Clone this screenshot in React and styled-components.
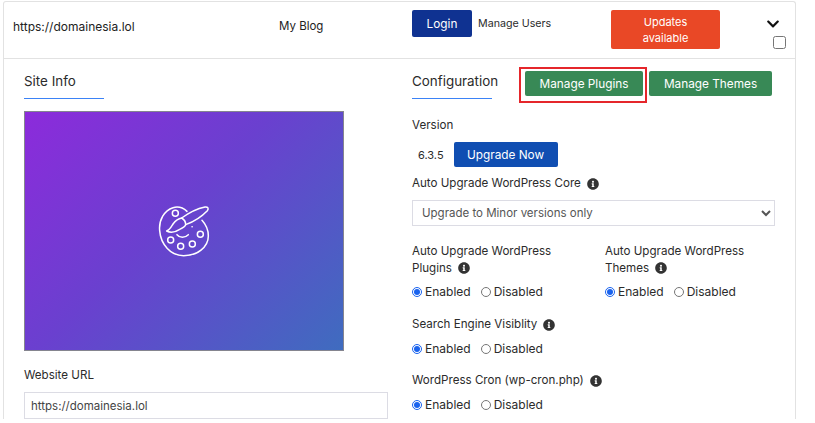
import { FaChevronDown, FaInfoCircle } from 'react-icons/fa';
import styled, { createGlobalStyle } from 'styled-components';

const GlobalStyle = createGlobalStyle`
  html, body {
    margin: 0;
    height: 100%;
    overflow: hidden;
    background: #ffffff;
  }

  body {
    font-family: Inter, "Liberation Sans", sans-serif;
    font-size: 12px;
    color: #2b2b2b;
  }
`;

const Card = styled.div`
  box-sizing: border-box;
  width: 793px;
  margin: 1px 0 0 3px;
  border: 1px solid #e2e2e2;
  border-bottom: none;
  border-radius: 3px 3px 0 0;
`;

const Header = styled.div`
  display: grid;
  grid-template-columns: 266px 133px 199px 109px 1fr;
  height: 57px;
  box-sizing: border-box;
  padding: 8px 0 0 9px;
  border-bottom: 1px solid #e2e2e2;
`;

const HeaderText = styled.span`
  margin-top: 9px;
  font-size: ${({ $size }) => $size || 12}px;
  line-height: 15px;
  color: #222;
`;

const LoginCell = styled.div`
  display: flex;
  align-items: flex-start;
  gap: 6px;
`;

const Button = styled.button`
  box-sizing: border-box;
  border: none;
  border-radius: 2px;
  padding: 0;
  font-family: inherit;
  font-size: 11.8px;
  color: #ffffff;
  background: ${({ $bg }) => $bg};
  width: ${({ $w }) => $w}px;
  height: ${({ $h }) => $h || 25}px;
`;

const ManageUsers = styled.span`
  margin-top: 6px;
  font-size: 10.7px;
  line-height: 15px;
`;

const UpdatesButton = styled(Button)`
  font-size: 11px;
  line-height: 16px;
`;

const Actions = styled.div`
  display: flex;
  flex-direction: column;
  align-items: flex-start;
  padding: 7px 0 0 46px;
  gap: 5px;
`;

const Checkbox = styled.input`
  margin: 0 0 0 7px;
  width: 13px;
  height: 13px;
`;

const Body = styled.div`
  display: grid;
  grid-template-columns: 388px 363px;
  padding-left: 20px;
  gap: 0;
`;

const LeftColumn = styled.div`
  display: flex;
  flex-direction: column;
  width: 364px;
`;

const TabTitle = styled.div`
  box-sizing: border-box;
  width: 80px;
  height: 40px;
  padding-top: 14px;
  font-size: 13.4px;
  line-height: 16px;
  white-space: nowrap;
  color: #2b2b2b;
  border-bottom: 1px solid #3b82f6;
`;

const Preview = styled.div`
  box-sizing: border-box;
  display: flex;
  align-items: center;
  justify-content: center;
  width: 320px;
  height: 240px;
  margin-top: 12px;
  border: 1px solid #85858f;
  background: linear-gradient(135deg, #8c2bdb 0%, #6a40cf 45%, #3f6cbf 100%);
`;

const FieldLabel = styled.label`
  display: flex;
  align-items: center;
  gap: 6px;
  font-size: 11.6px;
  line-height: 17px;
  color: #2b2b2b;
`;

const UrlLabel = styled(FieldLabel)`
  margin-top: 16px;
`;

const UrlInput = styled.input`
  box-sizing: border-box;
  width: 364px;
  height: 27px;
  margin-top: 8px;
  padding: 0 6px;
  border: 1px solid #dcdce4;
  font-family: inherit;
  font-size: 11.5px;
  color: #444;
`;

const RightColumn = styled.div`
  display: flex;
  flex-direction: column;
`;

const ConfigRow = styled.div`
  display: flex;
  align-items: flex-start;
`;

const Highlight = styled.div`
  box-sizing: border-box;
  width: 128px;
  height: 36px;
  margin: 8px 2px 0 27px;
  padding: 2px 0 0 4px;
  border: 2px solid #e5262b;
`;

const ThemesButton = styled(Button)`
  margin-top: 12px;
`;

const VersionLabel = styled(FieldLabel)`
  margin-top: 14px;
`;

const VersionRow = styled.div`
  display: flex;
  align-items: center;
  gap: 10px;
  margin-top: 8px;
  padding-left: 6px;
  font-size: 11px;
`;

const CoreLabel = styled(FieldLabel)`
  margin-top: 8px;
`;

const CoreSelect = styled.select`
  box-sizing: border-box;
  width: 363px;
  height: 26px;
  margin-top: 8px;
  padding: 0 5px;
  border: 1px solid #dcdce4;
  border-radius: 0;
  background: #ffffff;
  font-family: inherit;
  font-size: 11.5px;
  color: #555;
`;

const TwoColumns = styled.div`
  display: grid;
  grid-template-columns: 193px 170px;
  margin-top: 17px;
`;

const RadioRow = styled.div`
  display: flex;
  align-items: center;
  margin-top: 6px;
  height: 17px;
  font-size: 12px;
`;

const RadioOption = styled.label`
  display: flex;
  align-items: center;
  gap: 3px;
  margin-right: 10px;
`;

const Radio = styled.input`
  margin: 0;
  width: 10px;
  height: 10px;
  accent-color: #1a63ee;
`;

const Setting = styled.div`
  margin-top: ${({ $mt }) => $mt}px;

  ${RadioRow} {
    margin-top: 7px;
  }
`;

const InfoIcon = styled(FaInfoCircle)`
  flex: none;
  width: 12px;
  height: 12px;
  color: #333;
`;

const WrapLabel = styled.div`
  font-size: 11.6px;
  line-height: 17px;
  width: 150px;

  svg {
    margin-left: 6px;
    vertical-align: -2px;
  }
`;

const PaletteIcon = () => (
  <svg width="54" height="54" viewBox="52 50 162 162" fill="none" stroke="#fff" strokeWidth="4.5" strokeLinecap="round" strokeLinejoin="round">
    <path d="M142 72C130 61 114 57 100 61C74 69 57 98 60 130C63 172 94 205 132 205C172 205 206 180 206 146C206 128 199 112 187 99" />
    <circle cx="107" cy="78" r="9" />
    <circle cx="93" cy="158" r="9" />
    <circle cx="123" cy="177" r="9" />
    <circle cx="158" cy="170" r="9" />
    <circle cx="182" cy="141" r="9" />
    <path d="M112 142C120 152 136 152 146 142" />
    <path d="M157 118h.5" />
    <path d="M126 92C148 76 172 64 196 59C205 58 208 64 203 70C186 88 164 102 138 112" />
    <path d="M126 92C114 94 106 102 100 110C94 120 90 128 81 131C92 137 108 134 120 126C128 122 136 118 138 112C138 104 133 96 126 92Z" />
  </svg>
);

const EnabledDisabled = ({ name }) => (
  <RadioRow>
    <RadioOption>
      <Radio type="radio" name={name} defaultChecked />
      Enabled
    </RadioOption>
    <RadioOption>
      <Radio type="radio" name={name} />
      Disabled
    </RadioOption>
  </RadioRow>
);

export default function App() {
  return (
    <>
      <GlobalStyle />
      <Card>
        <Header>
          <HeaderText>https://domainesia.lol</HeaderText>
          <HeaderText $size={11.5}>My Blog</HeaderText>
          <LoginCell>
            <Button $bg="#0f3291" $w={60} $h={27}>Login</Button>
            <ManageUsers>Manage Users</ManageUsers>
          </LoginCell>
          <UpdatesButton $bg="#e94826" $w={109} $h={39}>
            Updates
            <br />
            available
          </UpdatesButton>
          <Actions>
            <FaChevronDown size={14} color="#111" />
            <Checkbox type="checkbox" />
          </Actions>
        </Header>
        <Body>
          <LeftColumn>
            <TabTitle>Site Info</TabTitle>
            <Preview>
              <PaletteIcon />
            </Preview>
            <UrlLabel>Website URL</UrlLabel>
            <UrlInput defaultValue="https://domainesia.lol" />
          </LeftColumn>
          <RightColumn>
            <ConfigRow>
              <TabTitle>Configuration</TabTitle>
              <Highlight>
                <Button $bg="#388956" $w={118}>Manage Plugins</Button>
              </Highlight>
              <ThemesButton $bg="#388956" $w={123}>Manage Themes</ThemesButton>
            </ConfigRow>
            <VersionLabel>Version</VersionLabel>
            <VersionRow>
              6.3.5
              <Button $bg="#104eb2" $w={104}>Upgrade Now</Button>
            </VersionRow>
            <CoreLabel>
              Auto Upgrade WordPress Core
              <InfoIcon />
            </CoreLabel>
            <CoreSelect defaultValue="minor">
              <option value="minor">Upgrade to Minor versions only</option>
            </CoreSelect>
            <TwoColumns>
              <div>
                <WrapLabel>
                  Auto Upgrade WordPress Plugins
                  <InfoIcon />
                </WrapLabel>
                <EnabledDisabled name="plugins" />
              </div>
              <div>
                <WrapLabel>
                  Auto Upgrade WordPress Themes
                  <InfoIcon />
                </WrapLabel>
                <EnabledDisabled name="themes" />
              </div>
            </TwoColumns>
            <Setting $mt={16}>
              <FieldLabel>
                Search Engine Visiblity
                <InfoIcon />
              </FieldLabel>
              <EnabledDisabled name="search" />
            </Setting>
            <Setting $mt={15}>
              <FieldLabel>
                WordPress Cron (wp-cron.php)
                <InfoIcon />
              </FieldLabel>
              <EnabledDisabled name="cron" />
            </Setting>
          </RightColumn>
        </Body>
      </Card>
    </>
  );
}
